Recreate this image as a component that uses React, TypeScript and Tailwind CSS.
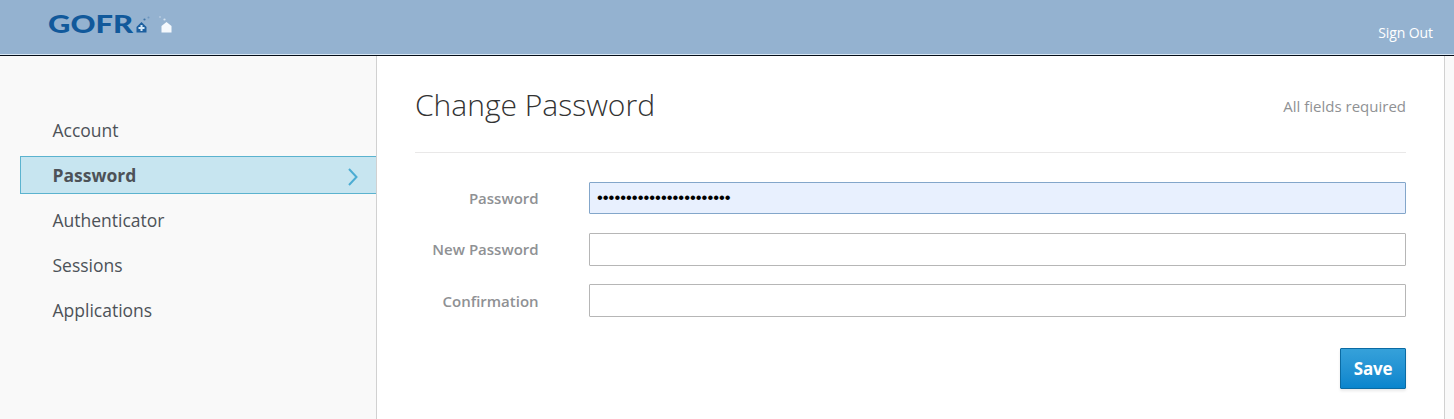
import React from "react";

const items = ["Account", "Password", "Authenticator", "Sessions", "Applications"];

function Field({ label, value, className, labelClass }: { label: string; value?: string; className?: string; labelClass?: string }) {
  return (
    <div className="flex h-[33px] items-center">
      <label className={"w-[124px] pr-[0.4px] text-right text-[15px] font-semibold text-[#8f9194] " + (labelClass ?? "")}>{label}</label>
      <input
        type="password"
        defaultValue={value}
        className={"ml-[50px] w-[817px] rounded-[1px] border px-[7px] font-['Liberation_Sans',sans-serif] text-[16.6px] text-black outline-none " + (className ?? "h-[33px] border-[#b6b6b6] bg-white")}
      />
    </div>
  );
}

function Logo() {
  return (
    <svg className="ml-[48px] mt-[8px]" width="130" height="32" viewBox="0 0 130 32">
      <text x="0" y="24.500" fontFamily="Lato" fontSize="24.500" fontWeight="900" fill="#11599b" textLength="85" lengthAdjust="spacingAndGlyphs">GOFR</text>
      <path d="M88.500 19l5-5 5 5v5.500h-10z" fill="#1c5f9f" />
      <path d="M93.500 17v6M90.500 20h6" stroke="#d5e8f7" strokeWidth="2" />
      <circle cx="96.500" cy="11.500" r="1.100" fill="#3f74a6" />
      <circle cx="100.500" cy="9.500" r="1" fill="#6f97bf" />
      <path d="M113.500 18l5-4 5 4v6.500h-10z" fill="#f5f9fd" />
      <circle cx="116.500" cy="11.500" r="1.100" fill="#d5e2ee" />
      <circle cx="112" cy="9" r="0.900" fill="#b7cbe0" />
    </svg>
  );
}

export default function App() {
  return (
    <div className="flex h-[419px] w-[1454px] flex-col overflow-hidden bg-[#f9f9f9] font-['Open_Sans',sans-serif]">
      <header className="flex h-[56px] shrink-0 justify-between border-b border-[#050d18] bg-[#94b2d0] shadow-[inset_0_-1px_0_#d9e8f5]">
        <Logo />
        <a className="mr-[21px] mt-[23px] text-[14px] leading-[20px] tracking-[-0.1px] text-white">Sign Out</a>
      </header>
      <div className="flex flex-1">
        <nav className="flex w-[377px] flex-col gap-[7px] border-r border-[#d1d1d1] pl-[20px] pt-[55px]">
          {items.map((t) => (
            <a
              key={t}
              className={
                "flex h-[38px] items-center justify-between border-y border-l pl-[31.5px] text-[17.5px] " +
                (t === "Password" ? "border-[#5bb3cf] bg-[#c7e5f0] font-bold text-[#4d5258]" : "border-transparent text-[#4d5258]")
              }
            >
              {t}
              {t === "Password" && (
                <svg className="mr-[18px] mt-[3px]" width="10" height="18" viewBox="0 0 10 18" fill="none" stroke="#4cacd3" strokeWidth="2">
                  <path d="M1 1l7.500 8L1 17" />
                </svg>
              )}
            </a>
          ))}
        </nav>
        <main className="w-[1068px] border-r border-[#d1d1d1] bg-white px-[38px]">
          <div className="flex h-[97px] items-start justify-between border-b border-[#e9e8e8] pt-[29px]">
            <h1 className="text-[30px] font-light leading-[40px] text-[#333]">Change Password</h1>
            <p className="mt-[11px] text-[15px] leading-[20px] text-[#8f9194]">All fields required</p>
          </div>
          <div className="mt-[29px] flex flex-col gap-[18px]">
            <Field label="Password" value="12345678901234567890123" className="mb-[1px] h-[32px] border-[#83a6ca] bg-[#e8f0fe]" />
            <Field label="New Password" />
            <Field label="Confirmation" labelClass="pt-[2px]" />
          </div>
          <div className="mt-[31px] flex justify-end">
            <button className="h-[41px] w-[66px] rounded-[1px] border border-[#0b6ba3] bg-linear-to-b from-[#35a1da] to-[#0885cd] text-[17px] font-bold tracking-[-0.2px] text-white shadow-[0_2px_3px_rgba(0,0,0,0.09)]">Save</button>
          </div>
        </main>
      </div>
    </div>
  );
}
